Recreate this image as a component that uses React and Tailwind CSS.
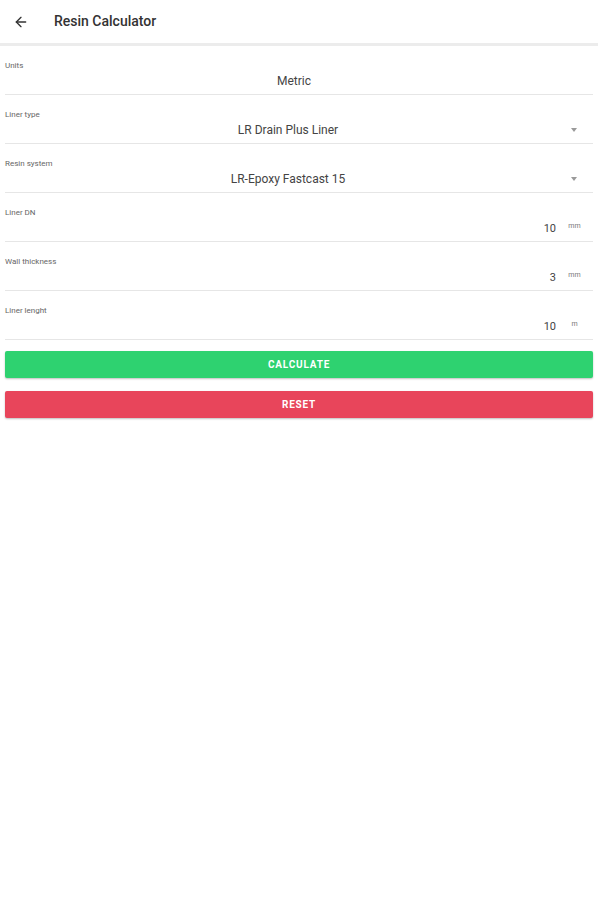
import { ArrowLeft } from 'lucide-react';

const font = { fontFamily: 'Roboto, "Liberation Sans", sans-serif' };

function SelectRow({ label, value, arrow }) {
  return (
    <div className="relative h-[49px] border-b border-[#e6e6e6] mx-[5px]">
      <div className="pt-[15px] text-[8px] leading-[10px] text-[#666]">{label}</div>
      <div className={`flex items-center mt-[3px] ${arrow ? 'pr-[22px]' : 'pr-[10px]'}`}>
        <div className="flex-1 text-center text-[12px] leading-[14px] text-[#444]">{value}</div>
        {arrow && (
          <div className="absolute right-[16px] top-[33px] w-0 h-0 border-l-[3px] border-r-[3px] border-t-[4px] border-l-transparent border-r-transparent border-t-[#9a9a9a]" />
        )}
      </div>
    </div>
  );
}

function NumberRow({ label, value, unit }) {
  return (
    <div className="h-[49px] border-b border-[#e6e6e6] mx-[5px]">
      <div className="pt-[15px] text-[8px] leading-[10px] text-[#666]">{label}</div>
      <div className="flex justify-end items-start mt-[4px]">
        <span className="text-[11px] leading-[14px] text-[#444]">{value}</span>
        <span className="w-[37px] text-center text-[7px] leading-[8px] text-[#777]">{unit}</span>
      </div>
    </div>
  );
}

export default function App() {
  return (
    <div className="w-[598px] h-[900px] bg-white" style={font}>
      <div className="h-[46px] flex items-center border-b-[3px] border-[#ececec]">
        <ArrowLeft size={16} strokeWidth={2} className="ml-[13px] text-[#333]" />
        <span className="ml-[25px] text-[14px] font-medium text-[#333]">Resin Calculator</span>
      </div>
      <SelectRow label="Units" value="Metric" />
      <SelectRow label="Liner type" value="LR Drain Plus Liner" arrow />
      <SelectRow label="Resin system" value="LR-Epoxy Fastcast 15" arrow />
      <NumberRow label="Liner DN" value="10" unit="mm" />
      <NumberRow label="Wall thickness" value="3" unit="mm" />
      <NumberRow label="Liner lenght" value="10" unit="m" />
      <div className="px-[5px] pt-[11px] flex flex-col gap-[13px]">
        <button className="h-[27px] w-full bg-[#2ed270] text-white text-[10px] font-bold tracking-[0.08em] rounded-[2px] shadow-[0_1px_2px_rgba(0,0,0,0.25)]">
          CALCULATE
        </button>
        <button className="h-[27px] w-full bg-[#e8455b] text-white text-[10px] font-bold tracking-[0.08em] rounded-[2px] shadow-[0_1px_2px_rgba(0,0,0,0.25)]">
          RESET
        </button>
      </div>
    </div>
  );
}
